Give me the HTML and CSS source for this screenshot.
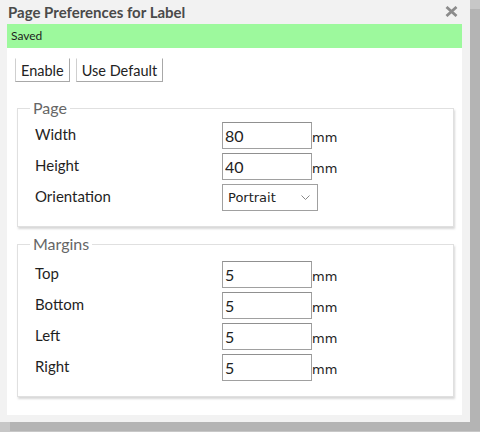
FILE: index.html
```html
<!DOCTYPE html>
<html>
<head>
<meta charset="utf-8">
<link rel="stylesheet" href="styles.css">
</head>
<body>
<div class="dialog">
  <div class="titlebar">
    <span class="title">Page Preferences for Label</span>
    <span class="close" aria-label="close">
      <svg width="13" height="11" viewBox="0 0 13 11"><path d="M1.5 1 L11.5 10 M11.5 1 L1.5 10" stroke="#8c8c8c" stroke-width="2.8" stroke-linecap="butt"/></svg>
    </span>
  </div>
  <div class="status">Saved</div>
  <div class="content">
    <div class="toolbar">
      <button class="btn">Enable</button>
      <button class="btn">Use Default</button>
    </div>
    <fieldset class="group group-page">
      <legend>Page</legend>
      <div class="rows">
        <label class="lbl">Width</label>
        <div class="field"><input class="num" value="80"><span class="unit">mm</span></div>
        <label class="lbl">Height</label>
        <div class="field"><input class="num" value="40"><span class="unit">mm</span></div>
        <label class="lbl">Orientation</label>
        <div class="field"><div class="select"><span>Portrait</span><svg width="9" height="6" viewBox="0 0 9 6"><path d="M0.5 0.5 L4.5 4.5 L8.5 0.5" fill="none" stroke="#888" stroke-width="1"/></svg></div></div>
      </div>
    </fieldset>
    <fieldset class="group group-margins">
      <legend>Margins</legend>
      <div class="rows">
        <label class="lbl">Top</label>
        <div class="field"><input class="num" value="5"><span class="unit">mm</span></div>
        <label class="lbl">Bottom</label>
        <div class="field"><input class="num" value="5"><span class="unit">mm</span></div>
        <label class="lbl">Left</label>
        <div class="field"><input class="num" value="5"><span class="unit">mm</span></div>
        <label class="lbl">Right</label>
        <div class="field"><input class="num" value="5"><span class="unit">mm</span></div>
      </div>
    </fieldset>
  </div>
</div>
</body>
</html>
```
FILE: styles.css
```css
html, body {
  margin: 0;
  padding: 0;
}
body {
  background: #c7c7c7;
  width: 480px;
  height: 432px;
  overflow: hidden;
  font-family: "Lato", "Open Sans", sans-serif;
}
.dialog {
  width: 470px;
  height: 422px;
  box-sizing: border-box;
  background: #f2f2f2;
  box-shadow: 10px 9px 0 #b4b4b4;
  padding: 0 8px 7px 7px;
  display: flex;
  flex-direction: column;
}
.titlebar {
  height: 24px;
  display: flex;
  align-items: center;
  justify-content: space-between;
}
.title {
  font-weight: bold;
  font-size: 15px;
  color: #4a4a4a;
  padding-left: 1px;
  margin-top: -1px;
}
.close {
  display: flex;
  margin-right: 4px;
  margin-top: -1px;
}
.status {
  height: 24px;
  background: #9df99d;
  font-size: 12px;
  color: #1e1e1e;
  line-height: 24px;
  padding-left: 4px;
}
.content {
  flex: 1;
  background: #fff;
  padding: 10px 8px 0 8px;
}
.toolbar {
  display: flex;
  gap: 6px;
}
.btn {
  font-family: inherit;
  font-size: 14.5px;
  color: #222;
  background: #fff;
  border: 1px solid #cfcfcf;
  border-top-color: #fff;
  border-right-color: #a8a8a8;
  border-bottom-color: #a8a8a8;
  height: 24px;
  padding: 0 5px;
  margin: 0;
}
.group {
  margin: 18px 0 0 2px;
  border: 1px solid #e0e0e0;
  box-shadow: 1px 2px 2px #d8d8d8;
  padding: 6px 0 15px 17px;
}
.group-margins {
  margin-top: 9px;
  padding-top: 9px;
}
.group legend {
  font-size: 16px;
  color: #666;
  padding: 0 3px;
  margin-left: -5px;
  line-height: 16px;
}
.rows {
  display: grid;
  grid-template-columns: 187px auto;
  row-gap: 4px;
  align-items: center;
}
.lbl {
  font-size: 15px;
  color: #1f1f1f;
  margin-top: -4px;
}
.field {
  display: flex;
  align-items: center;
}
.num {
  width: 90px;
  height: 27px;
  box-sizing: border-box;
  border: 1px solid #a0a0a0;
  border-top-color: #909090;
  padding: 0 2px;
  margin: 0;
  font-family: inherit;
  font-size: 16px;
  color: #222;
  outline: none;
}
.unit {
  font-family: "DejaVu Sans", sans-serif;
  font-size: 13px;
  color: #222;
  margin-top: 4px;
}
.select {
  width: 96px;
  height: 27px;
  box-sizing: border-box;
  border: 1px solid #a0a0a0;
  display: flex;
  align-items: center;
  justify-content: space-between;
  padding: 0 7px 0 5px;
  font-family: "DejaVu Sans", sans-serif;
  font-size: 13px;
  color: #222;
}
```
